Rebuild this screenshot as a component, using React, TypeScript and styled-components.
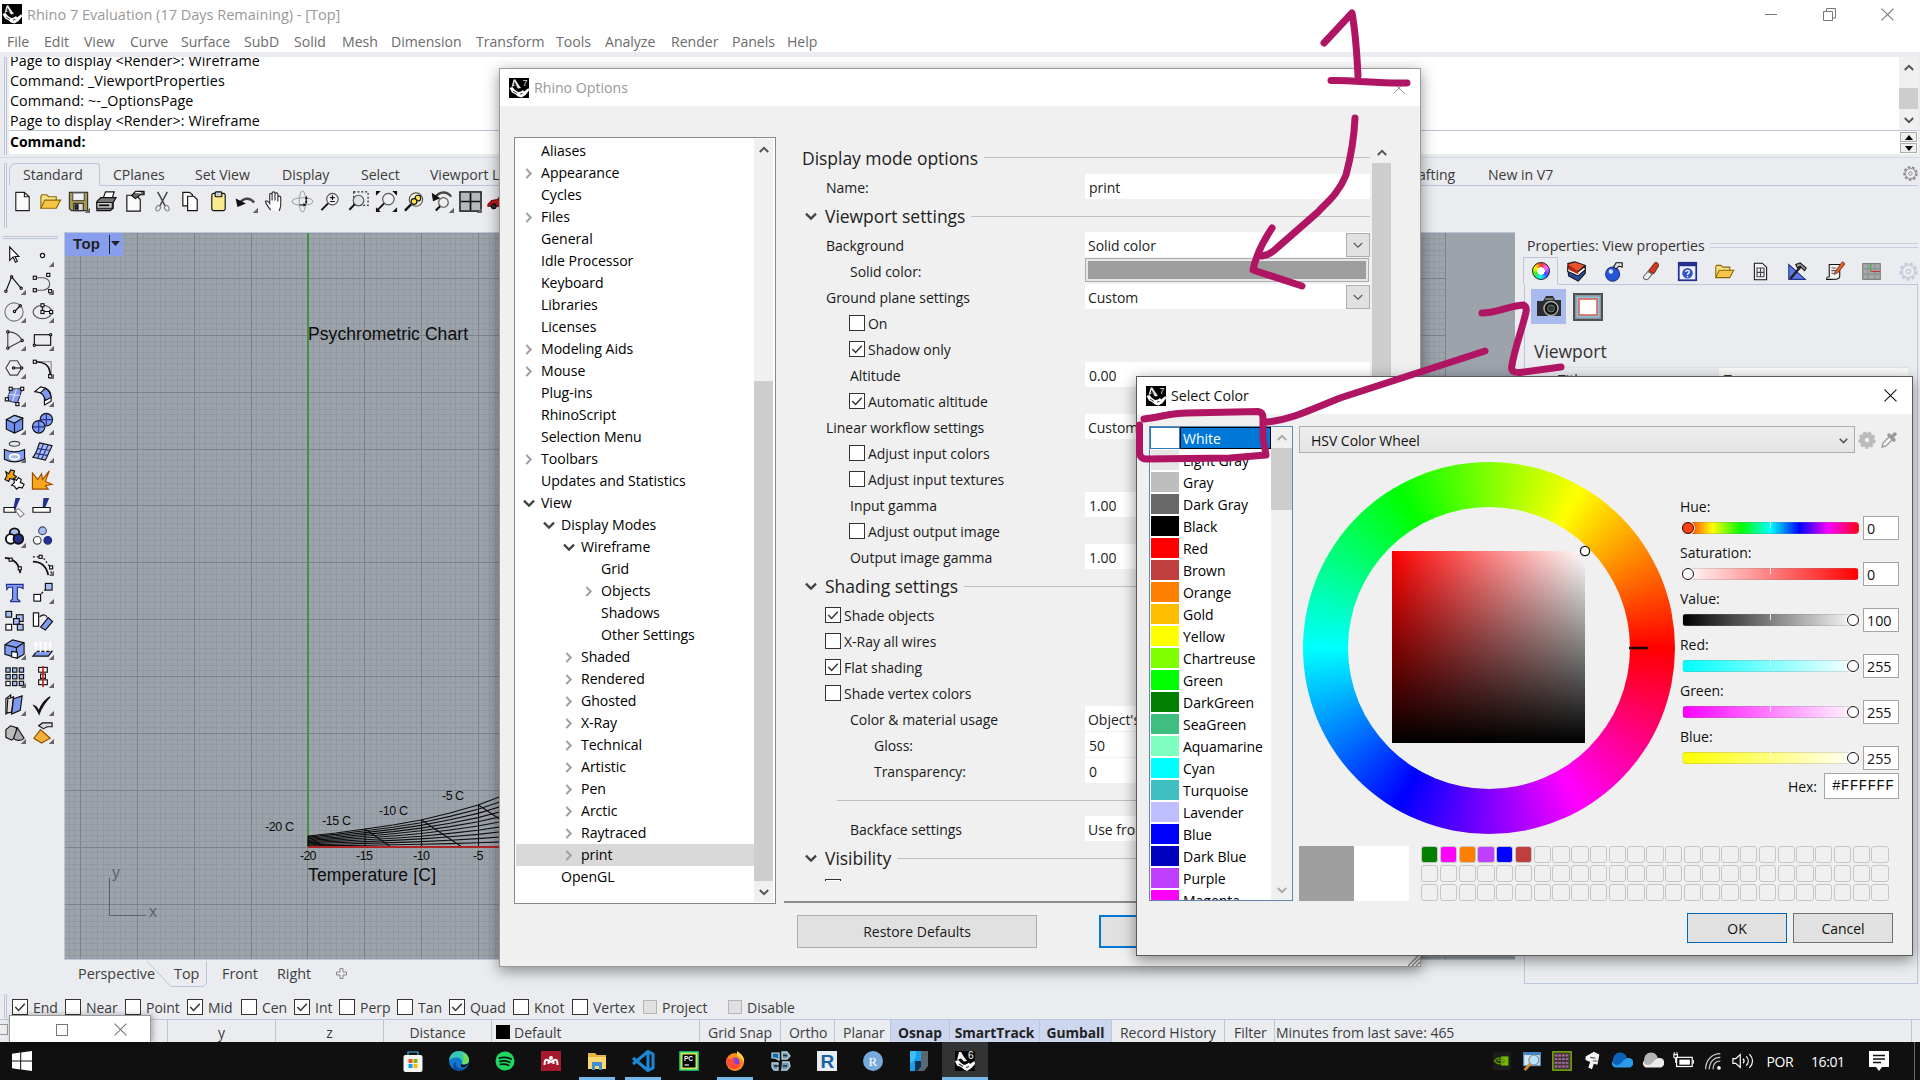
import React from "react";
import styled, { createGlobalStyle, css } from "styled-components";

const UI = `"Open Sans", "Noto Sans", sans-serif`;
const INK = "#1a1a1a";
const FACE = "#eaecf0";
const LINE = "#bcc6da";
const PEN = "#b01563";

const Global = createGlobalStyle`
  * { box-sizing: border-box; }
  body { margin: 0; background: ${FACE}; font-family: ${UI}; font-size: 14px; color: ${INK}; overflow: hidden; }
  svg { display: block; }
`;

/* ---------- main window ---------- */
const Screen = styled.div`
  position: relative; width: 1920px; height: 1080px; overflow: hidden;
  display: flex; flex-direction: column; background: ${FACE}; white-space: nowrap; letter-spacing: -0.03px;
`;
const TitleBar = styled.div`
  height: 28px; background: #fff; display: flex; align-items: center; padding: 0 26px 0 2px; gap: 5px; color: #999; font-size: 14.5px; letter-spacing: 0;
`;
const Spacer = styled.div`flex: 1;`;
const WindowButtons = styled.div`display: flex; gap: 45px;`;
const MenuBar = styled.div`
  height: 24px; background: #fff; display: flex; align-items: center; padding: 3px 0 0 7px; color: #6c6c6c; line-height: 24px; font-size: 14.1px;
`;
const Slot = styled.span<{ w: number }>`flex: none; width: ${p => p.w}px; display: block;`;
const CommandArea = styled.div`
  height: 105px; padding: 5px 2px 0 4px; display: flex; border-bottom: 0;
`;
const Grip = styled.div<{ h: number; mt?: number }>`
  flex: none; width: 3px; height: ${p => p.h}px; margin-top: ${p => p.mt || 0}px; border-left: 1px solid ${LINE}; border-right: 1px solid ${LINE};
`;
const CommandBox = styled.div`
  flex: 1; margin-left: 2px; height: 97px; background: #fff; color: #000; display: flex; flex-direction: column;
`;
const History = styled.div`height: 74px; border-bottom: 1px solid ${LINE}; display: flex; overflow: hidden;`;
const HistoryLines = styled.div`flex: 1; padding-left: 1px; line-height: 20px; margin-top: -6px; font-size: 14.3px; letter-spacing: 0.1px; div { height: 20px; }`;
const Prompt = styled.div`flex: 1; display: flex; padding-left: 1px; line-height: 22px; font-weight: 700; font-size: 14px; justify-content: space-between;`;
const SpinCol = styled.div`width: 18px; display: flex; flex-direction: column; gap: 1px; padding-top: 1px;`;
const SpinBtn = styled.div`height: 10px; width: 17px; border: 1px solid #aaa; background: #f0f0f0; display: grid; place-items: center;`;

const ScrollTrack = styled.div<{ w: number }>`
  flex: none; width: ${p => p.w}px; background: #f0f0f0; display: flex; flex-direction: column; align-items: center;
`;
const ScrollThumb = styled.div<{ h: number }>`flex: none; width: 100%; height: ${p => p.h}px; background: #cdcdcd;`;
const ScrollArrow = styled.div<{ h: number }>`flex: none; height: ${p => p.h}px; display: grid; place-items: center;`;
const ScrollGap = styled.div<{ h: number }>`flex: none; height: ${p => p.h}px;`;

const ToolTabs = styled.div`
  height: 29px; border-top: 1px solid #d3d9e5; display: flex; padding: 5px 2px 0 4px; color: #3c3c3c; font-size: 14.1px;
`;
const TabStrip = styled.div`
  flex: 1; margin-left: 2px; height: 23px; display: flex; border-bottom: 1px solid ${LINE}; line-height: 23px; padding-right: 0;
`;
const ActiveTab = styled.div`
  width: 91px; height: 23px; border: 1px solid ${LINE}; border-bottom-color: ${FACE}; border-radius: 7px 3px 0 0; padding-left: 13px; margin-right: 13px; line-height: 22px;
`;
const ToolRow = styled.div`height: 46px; display: flex; padding: 0 0 0 4px;`;
const ToolIcons = styled.div`display: flex; padding: 2px 0 0 2px; height: 30px;`;
const IconCell = styled.div<{ w?: number; h?: number }>`
  flex: none; width: ${p => p.w || 28}px; height: ${p => p.h || 28}px; display: grid; place-items: center;
`;
const Middle = styled.div`height: 760px; display: flex;`;
const Toolbox = styled.div`flex: none; width: 64px; padding: 4px 6px 0 0;`;
const ToolboxHandle = styled.div`height: 3px; margin-left: 3px; border-top: 1px solid ${LINE}; border-bottom: 1px solid ${LINE}; margin-bottom: 2px;`;
const ToolGrid = styled.div`display: grid; grid-template-columns: 28px 28px; grid-auto-rows: 28.12px;`;
const ViewColumn = styled.div`flex: none; width: 1451px; display: flex; flex-direction: column;`;
const Viewport = styled.div`height: 728px; border: 1px solid ${LINE}; border-right: 0; background: #9da3ab; overflow: hidden;`;
const ViewTabs = styled.div`height: 32px; position: relative; display: flex; padding-left: 14px; line-height: 27px; color: #3c3c3c; font-size: 14.4px;`;
const TabOutline = styled.svg`position: absolute; left: 82px; top: 0;`;

const Properties = styled.div`flex: 1; min-width: 0; padding: 0 2px 0 8px; display: flex; flex-direction: column; color: #333;`;
const PropTitle = styled.div`height: 25px; display: flex; align-items: center; gap: 5px; padding: 1px 0 0 4px; font-size: 14.1px; &::after { content: ""; flex: 1; height: 3px; border-top: 1px solid #c5cfe2; border-bottom: 1px solid #c5cfe2; }`;
const PropTabs = styled.div`height: 28px; display: flex; border-bottom: 1px solid ${LINE};`;
const PropTab = styled.div<{ on?: boolean }>`
  flex: none; width: ${p => (p.on ? 35 : 36.9)}px; height: 28px; display: grid; place-items: center;
  ${p => p.on && css`border: 1px solid ${LINE}; border-bottom-color: ${FACE};`}
`;
const PropBody = styled.div`height: 699px; border: 1px solid ${LINE}; border-top: 0; margin-left: 1px; padding: 4px 9px 0 6px;`;
const PropButtons = styled.div`display: flex; gap: 7px; align-items: center;`;
const PropButton = styled.div<{ on?: boolean }>`width: ${p => (p.on ? 35 : 30)}px; height: ${p => (p.on ? 35 : 28)}px; background: ${p => (p.on ? "#a9bbee" : "transparent")}; display: grid; place-items: center;`;
const PropHeading = styled.div`height: 43px; padding: 12px 0 0 3px; line-height: 31px; font-size: 17.5px;`;
const PropRow = styled.div`height: 27px; display: flex; border-top: 1px solid #dfe2e8; line-height: 24px; span { width: 188px; padding-left: 27px; } div { flex: 1; background: #fbfbfc; padding-left: 5px; }`;

const OsnapBar = styled.div`height: 28px; border-bottom: 1px solid ${LINE}; display: flex; padding: 2px 0 0 4px; color: #3c3c3c;`;
const Snap = styled.div<{ w: number }>`flex: none; width: ${p => p.w}px; display: flex; gap: 5px; padding-top: 5px; line-height: 17px;`;
const Box = styled.span<{ off?: boolean }>`
  flex: none; width: ${p => (p.off ? 14 : 16)}px; height: ${p => (p.off ? 14 : 16)}px; margin-top: ${p => (p.off ? 1 : 0)}px;
  border: 1px solid ${p => (p.off ? "#b5b5b5" : "#333")}; background: ${p => (p.off ? "#e0e0e0" : "#fff")}; display: grid; place-items: center;
`;
const StatusBar = styled.div`height: 22px; display: flex; line-height: 25px; color: #3c3c3c;`;
const Status = styled.div<{ w: number; on?: boolean; pad?: number; mid?: boolean }>`
  flex: none; width: ${p => p.w}px; height: 22px; border-right: 1px solid ${LINE}; padding-left: ${p => p.pad || 0}px; display: flex; gap: 4px;
  ${p => p.mid && "justify-content: center;"}
  ${p => p.on && "background: #ccd6ee; font-weight: 700; font-size: 13.8px; color: #222; justify-content: center;"}
`;
const LayerChip = styled.span`width: 14px; height: 14px; background: #000; margin-top: 5px;`;
const MiniWindow = styled.div`
  position: absolute; left: 9px; top: 1015px; width: 142px; height: 27px; background: #fff; border: 1px solid #999; border-bottom: 0;
  box-shadow: 2px 0 6px rgba(0,0,0,.3); display: flex; align-items: center; justify-content: space-between; padding: 1px 23px 0 46px;
`;
const MiniEdge = styled.div`position: absolute; left: -2px; top: 1024px; width: 10px; height: 11px; border: 1px solid #999; border-left: 0;`;
const Taskbar = styled.div`height: 38px; background: #101010; display: flex; color: #fff; align-items: stretch;`;
const Start = styled.div`width: 390px; padding: 9px 0 0 12px;`;
const App_ = styled.div<{ state?: "run" | "on" }>`
  flex: none; width: 46px; display: flex; justify-content: center; align-items: center; position: relative;
  ${p => p.state === "on" && "background: #333;"}
  ${p => p.state && css`&::after { content: ""; position: absolute; bottom: 0; height: 3px; left: ${p.state === "on" ? 0 : 5}px; right: ${p.state === "on" ? 0 : 5}px; background: #76b9ed; }`}
`;
const Tray = styled.div`display: flex; align-items: center; width: 428px; border-right: 1px solid #666; margin-right: 5px; font-size: 14px;`;
const TrayCell = styled.div<{ w: number }>`width: ${p => p.w}px; display: grid; place-items: center; letter-spacing: -0.4px;`;

/* ---------- options dialog ---------- */
const OptionsDialog = styled.div`
  position: absolute; left: 499px; top: 68px; width: 922px; height: 899px; background: #f0f0f0; border: 1px solid #9a9a9a;
  box-shadow: 0 4px 14px rgba(0,0,0,.42); display: flex; flex-direction: column; color: #1a1a1a;
`;
const DialogTitle = styled.div<{ h: number; dim?: boolean }>`
  height: ${p => p.h}px; background: #fff; display: flex; align-items: center; gap: 5px; padding: 0 15px 0 9px; color: ${p => (p.dim ? "#999" : "#111")}; font-size: 14.2px;
`;
const OptionsBody = styled.div`display: flex; padding: 31px 0 0 14px; height: 798px;`;
const Tree = styled.div`width: 262px; height: 767px; border: 1px solid #828790; background: #fff; display: flex; padding: 1px 2px 1px 1px; color: #000;`;
const TreeRows = styled.div`flex: 1; padding-top: 1px; font-size: 14.1px;`;
const TreeRow = styled.div<{ depth: number; on?: boolean }>`
  height: 22px; line-height: 22px; display: flex; align-items: center; padding-left: ${p => 3 + p.depth * 20}px; background: ${p => (p.on ? "#d9d9d9" : "transparent")};
`;
const Twist = styled.span`width: 22px; display: grid; place-items: center; padding-right: 3px;`;
const Form = styled.div`width: 607px; margin-left: 8px; display: flex; border-bottom: 2px solid #8b8b8b; height: 766px;`;
const FormRows = styled.div`width: 588px; padding: 0 2px 0 18px; height: 744px; overflow: hidden;`;
const Heading = styled.div<{ h: number; drop?: number }>`
  height: ${p => p.h}px; display: flex; align-items: center; font-size: 17.5px; gap: 6px; padding-top: ${p => p.drop || 0}px; color: #222; letter-spacing: -0.04px;
  &::after { content: ""; flex: 1; height: 1px; background: #c0c0c0; }
`;
const HeadTwist = styled.span`width: 17px; padding-left: 3px;`;
const Field = styled.div<{ pad: number }>`height: 26px; display: flex; padding-left: ${p => p.pad}px; line-height: 27px; gap: 3px;`;
const FieldLabel = styled.span`flex: 1; display: flex; gap: 3px; i { margin-top: 5px; }`;
const Input = styled.div<{ pad?: number }>`width: 285px; height: 25px; background: #fff; padding-left: ${p => p.pad ?? 4}px; display: flex; justify-content: space-between; color: #222;`;
const ComboBtn = styled.span`width: 24px; height: 24px; margin-top: 1px; background: #e1e1e1; border: 1px solid #adadad; display: grid; place-items: center;`;
const ColorBtn = styled.div`width: 284px; margin-right: 1px; height: 24px; border: 1px solid #adadad; background: #e6e6e6; padding: 2px; &::before { content: ""; display: block; height: 18px; background: #9e9e9e; }`;
const Rule = styled.div`height: 32px; padding: 16px 0 0 35px; &::before { content: ""; display: block; height: 1px; background: #c0c0c0; }`;
const OptionsFoot = styled.div`padding: 11px 0 0 297px; display: flex; gap: 62px;`;
const Button = styled.div<{ w: number; h: number; edge: string; thick?: number }>`
  flex: none; width: ${p => p.w}px; height: ${p => p.h}px; border: ${p => p.thick || 1}px solid ${p => p.edge}; background: #e1e1e1; display: grid; place-items: center;
`;
const ResizeGrip = styled.svg`position: absolute; right: 0; bottom: 0;`;

/* ---------- colour dialog ---------- */
const ColorDialog = styled.div`
  position: absolute; left: 1136px; top: 376px; width: 777px; height: 580px; background: #f0f0f0; border: 1px solid #5a5a5a;
  box-shadow: 0 4px 14px rgba(0,0,0,.45); display: flex; flex-direction: column; color: #111;
`;
const ColorBody = styled.div`display: flex; padding: 12px 0 0 12px; gap: 6px; height: 499px;`;
const NameList = styled.div`width: 144px; height: 475px; border: 1px solid #5f87b0; background: #fff; display: flex; overflow: hidden;`;
const NameRows = styled.div`flex: 1;`;
const NameRow = styled.div<{ on?: boolean }>`
  height: 22px; display: flex; line-height: 23px; color: ${p => (p.on ? "#fff" : "#000")};
  span { flex: 1; padding-left: 3px; ${p => p.on && "background: #0078d7; border: 1px solid #000; padding-left: 2px; line-height: 21px;"} }
`;
const Swatch = styled.i<{ c: string; on?: boolean }>`width: 28px; height: 20px; margin: 1px; background: ${p => p.c}; ${p => p.on && "outline: 1px solid #2a7ac8;"}`;
const ColorMain = styled.div`display: flex; flex-direction: column; width: 601px;`;
const PickerBar = styled.div`display: flex; align-items: center; height: 27px; gap: 3px;`;
const Picker = styled.div`width: 556px; height: 27px; border: 1px solid #adadad; background: linear-gradient(#eee, #e4e4e4); display: flex; align-items: center; justify-content: space-between; padding: 1px 6px 0 11px;`;
const PickerRow = styled.div`display: flex; height: 393px;`;
const Wheel = styled.div`
  flex: none; width: 372px; height: 372px; margin: 9px 0 0 4px; border-radius: 50%;
  background: conic-gradient(from 90deg, #f00, #f0f, #00f, #0ff, #0f0, #ff0, #f00); display: grid; place-items: center; position: relative;
`;
const WheelHole = styled.div`width: 282px; height: 282px; border-radius: 50%; background: #f0f0f0; display: grid; place-items: center;`;
const SatVal = styled.div`width: 193px; height: 192px; background: linear-gradient(transparent, #000), linear-gradient(90deg, #f00, #fff); margin: -2px 0 0 -1px;`;
const WheelMark = styled.svg`position: absolute; left: 0; top: 0;`;
const Sliders = styled.div`width: 219px; margin: 43px 0 0 5px;`;
const Channel = styled.div`height: 46px; line-height: 21px;`;
const ChannelRow = styled.div`display: flex; align-items: center; justify-content: space-between; height: 22px;`;
const SliderWrap = styled.div`width: 177px; height: 12px; margin-left: 2px; position: relative;`;
const SliderTrack = styled.div<{ g: string }>`height: 12px; border-radius: 4px; background: ${p => p.g}; border: 1px solid rgba(130,130,130,.28); &::after { content: ""; display: block; width: 1px; height: 6px; margin: -1px auto 0; background: rgba(255,255,255,.8); }`;
const Knob = styled.i<{ end?: boolean; c: string }>`position: absolute; top: 0; ${p => (p.end ? "right: 0;" : "left: 0;")} width: 12px; height: 12px; border-radius: 50%; border: 1.5px solid #111; background: ${p => p.c}; box-shadow: 0 0 0 1px rgba(255,255,255,.8);`;
const NumBox = styled.div`width: 36px; height: 24px; border: 1px solid #a5a5a5; background: #fff; padding-left: 3px; line-height: 23px; font-size: 14.3px;`;
const HexRow = styled.div`display: flex; justify-content: flex-end; align-items: center; gap: 7px; height: 26px; margin-top: 1px;`;
const HexBox = styled.div`width: 75px; height: 26px; border: 1px solid #a5a5a5; background: #fff; font: 14.6px/24px "Liberation Mono", monospace; padding-left: 7px; letter-spacing: 0.1px;`;
const Bottom = styled.div`display: flex; gap: 12px;`;
const Compare = styled.div`width: 110px; height: 55px; display: flex; background: #fff; &::before { content: ""; width: 55px; background: #9e9e9e; }`;
const Palette = styled.div`display: grid; grid-template-columns: repeat(25, 18.77px); grid-auto-rows: 18.9px;`;
const Chip = styled.i<{ c?: string }>`width: 17.4px; height: 17.4px; border-radius: 3px; border: 1px solid #c6c6c6; background: ${p => p.c || "transparent"};`;
const ColorFoot = styled.div`display: flex; justify-content: flex-end; gap: 6px; padding-right: 19px;`;

const PenLayer = styled.svg`position: absolute; left: 0; top: 0; pointer-events: none;`;

/* ---------- glyphs ---------- */
type Dir = "up" | "down" | "right";
const Chev = ({ d, c = "#555", s = 10, w = 2 }: { d: Dir; c?: string; s?: number; w?: number }) => (
  <svg width={s} height={s} viewBox="0 0 10 10" fill="none" stroke={c} strokeWidth={w}>
    <path d={d === "up" ? "M.8 7 5 2.8 9.2 7" : d === "down" ? "M.8 3 5 7.2 9.2 3" : "M3 .8 7 5 3 9.2"} />
  </svg>
);
const Check = () => (
  <svg width="14" height="14" viewBox="0 0 14 14" fill="none" stroke="#333" strokeWidth="1.5"><path d="M2.3 7 5.6 10.4 11.8 3.8" /></svg>
);
const Cross = ({ c = "#777", s = 12 }: { c?: string; s?: number }) => (
  <svg width={s} height={s} viewBox="0 0 12 12" stroke={c}><path d="M.5.5 11.5 11.5M11.5.5.5 11.5" /></svg>
);
const Logo = ({ n }: { n?: string }) => (
  <svg width="20" height="20" viewBox="0 0 20 20">
    <rect width="20" height="20" fill="#000" />
    <path d="M2.500 9 4.500 2 6 1 9.500 6.500 12 10 9 10.500 6.500 7Z" fill="#e8e8e8" />
    <path d="M4.500 7 5.500 3.500 8 8" fill="#333" />
    <path d="M.5 10 3.500 9 6 12 9 14 12 13.500 14 12 15 13.500 19.500 10 20 12.500 16.500 17 12.500 19.500 9 18.500 6 16 3 14.500Z" fill="#fff" />
    <path d="M4 13 8 15.500M11 16 13.500 15.500" stroke="#444" strokeWidth="1" fill="none" />
    {n && <text x="13.500" y="7.500" fontSize="9" fill="#ddd" fontFamily="Liberation Sans, sans-serif">{n}</text>}
  </svg>
);
const Gear = ({ s = 16, c = "#888", solid }: { s?: number; c?: string; solid?: boolean }) => (
  <svg width={s} height={s} viewBox="0 0 16 16" fill="none" stroke={c}>
    <circle cx="8" cy="8" r="6.8" strokeWidth="1.8" strokeDasharray="2.9 1.8" strokeLinecap="butt" />
    <circle cx="8" cy="8" r={solid ? 4.2 : 5.4} strokeWidth={solid ? 4.5 : 1} />
    {!solid && <circle cx="8" cy="8" r="1.8" />}
  </svg>
);
const Pic = ({ k, corner, s = 24 }: { k: React.ReactNode; corner?: boolean; s?: number }) => (
  <svg width={s} height={s} viewBox="0 0 24 24" fill="none" stroke="#111" strokeWidth="1.2">
    {k}
    {corner && <path d="M24 18.5V24H18.5Z" fill="#666" stroke="none" />}
  </svg>
);
const sq = (x: number, y: number, r = 1.6) => <rect x={x - r} y={y - r} width={2 * r} height={2 * r} fill="#fff" key={`${x}-${y}`} />;
const dot = (x: number, y: number) => <circle cx={x} cy={y} r="1.2" fill="#fff" key={`${x}:${y}`} />;
const cell = (x: number, y: number, s: number, f: string) => <rect x={x} y={y} width={s} height={s} fill={f} key={`${x}/${y}`} />;
const BL = "#7f9af0", LB = "#a9bdf5", NV = "#23308c";

const folder = <><path d="M2 19V7l1-2h5l2 2h8v4" fill="#f8e08a" stroke="#8a6800" /><path d="M2 19 6 10.500H22.500L18 19Z" fill="#f6c64a" stroke="#8a6800" /></>;
const mag = <><circle cx="14" cy="9.500" r="6" stroke="#555" fill="#eef0f3" /><path d="M9.500 14 2.500 21" strokeWidth="2" /></>;

const topIcons: [React.ReactNode, boolean?][] = [
  [<path d="M5 2.500H14L19 7V21.500H5ZM14 2.500V7H19" fill="#fafafa" stroke="#222" />],
  [folder],
  [<><path d="M2.500 2.500H21.500V21.500H4.500L2.500 19.500Z" fill="#a79a4b" stroke="#333" /><rect x="6" y="3" width="12" height="8" fill="#eef2f4" stroke="#555" /><rect x="7" y="14" width="10" height="7.500" fill="#ddd" stroke="#333" /><rect x="8.500" y="15.500" width="3" height="4.500" fill="#333" /></>, true],
  [<><path d="M8 10 11 2H20L17.500 10Z" fill="#fff" /><path d="M2 12 6 8H22L19 13V19L16 21.500H2Z" fill="#777" /><path d="M2 13H18V19H2Z" fill="#d6d6d6" /><path d="M4 16H15" strokeWidth="2" /></>],
  [<><path d="M4 5.500H14L18 10V22H4Z" fill="#fafafa" /><path d="M9 6 13 1.500H22V5H18L13 9Z" fill="#666" /><path d="M13 2.500 19 3" stroke="#fff" /></>],
  [<><path d="M7 2 15 17M17 2 9 17" stroke="#444" strokeWidth="1.500" /><ellipse cx="7.500" cy="19" rx="2.200" ry="3" transform="rotate(30 7.500 19)" stroke="#888" /><ellipse cx="16.500" cy="19" rx="2.200" ry="3" transform="rotate(-30 16.500 19)" stroke="#888" /></>],
  [<><path d="M4 2.500H11L14 5V16.500H4Z" fill="#fff" /><path d="M9 6.500H15.500L19 10V21.500H9Z" fill="#fff" /></>],
  [<><rect x="5" y="3.500" width="14" height="18" rx="2" fill="#fbe98c" /><rect x="8.500" y="2" width="7" height="5" rx="1" fill="#ccc" /></>],
  [<><path d="M4 15C8 8 15 7 20 13" stroke="#444" strokeWidth="2.600" /><path d="M1.500 10 3 17 10 14Z" fill="#111" /></>, true],
  [<path d="M8 21C5 17 3 14 2.500 12 3.500 10.500 5.500 12 7 14V5C7 3 9.500 3 9.500 5V11 3.500C9.500 1.500 12.500 1.500 12.500 3.500V11 4.500C12.500 2.500 15.500 2.500 15.500 4.500V12 7.500C16 6 18.500 6 18.500 8V15C18.500 19 17 20 17 22" fill="#fff" stroke="#333" />],
  [<g stroke="#999" strokeWidth="1"><ellipse cx="12" cy="12" rx="11" ry="4" /><ellipse cx="12" cy="12" rx="3.500" ry="11" /><path d="M9 15.500H13.500M16 8.500V13" stroke="#111" /><path d="M16 15 17 11.500 14.500 12ZM13 13.500 13 17.500 16 15.500ZM16 6 14.500 9H17.500Z" fill="#111" stroke="none" /></g>],
  [<>{mag}<path d="M11.500 8H16.500M14 5.500V10.500M11.500 12H16.500" /></>],
  [<><rect x="7" y="2" width="15" height="14" stroke="#222" strokeDasharray="2 2" /><circle cx="12" cy="11" r="5.500" fill="#dfe2e8" stroke="#555" /><path d="M8 15 2.500 20.500" strokeWidth="2.200" /></>],
  [<>{mag}<path d="M1 1H6L1 6ZM23 1H18L23 6ZM23 23H18L23 18ZM1 23V18L6 23Z" fill="#111" stroke="none" /></>],
  [<><circle cx="13.500" cy="10" r="7" stroke="#555" fill="#f4f2dc" /><circle cx="15.500" cy="8.500" r="3" fill="#ffe14a" /><circle cx="11.500" cy="12" r="3" fill="#ffe14a" /><path d="M8.500 15 2 21.500" strokeWidth="2.400" /></>],
  [<><path d="M4 8C9 1 17 1 21 7" stroke="#444" strokeWidth="2.400" /><path d="M1.500 4 2.500 11 8.500 8.500Z" fill="#111" /><circle cx="13" cy="13" r="5" stroke="#555" fill="#eee" /><path d="M9.500 17 5 21.500" strokeWidth="2.200" /></>, true],
  [<><rect x="1" y="2" width="22" height="20" fill="#b4b7bc" strokeWidth="1.500" /><path d="M12 3V21M2 12H22" strokeWidth="1.800" /></>, true],
  [<><path d="M1 15 5 11 11 10 14 6H24V17H1Z" fill="#c81a1a" stroke="#700" /><circle cx="7" cy="17" r="2.500" fill="#333" /></>],
];

const boxShape = (f: string) => <><path d="M3.500 8 12 3.500 20.500 6.500V18L12 22 3.500 18Z" fill={f} /><path d="M3.500 8 12 3.500 20.500 6.500 12 11.500Z" fill={LB} /><path d="M12 11.500V22" /></>;
const sideIcons: [React.ReactNode, boolean?][] = [
  [<path d="M7 3V17L10.500 13.500 13 19 15 18 12.500 13H16.500Z" fill="#fff" />],
  [<circle cx="12" cy="12" r="2.200" fill="#fff" />, true],
  [<><path d="M3 20 9 5 19 17" />{dot(3, 20)}{dot(9, 5)}{dot(19, 17)}</>, true],
  [<><path d="M4 6H12C22 6 22 19 12 19H4" stroke="#555" />{sq(4, 6)}{sq(18, 3)}{sq(4, 19)}{sq(20, 20)}</>, true],
  [<><circle cx="11.500" cy="12.500" r="9.500" stroke="#777" /><path d="M12 12 18 6" />{dot(12, 12)}{dot(18, 6)}</>, true],
  [<><ellipse cx="12" cy="12.500" rx="9.800" ry="7" stroke="#555" /><path d="M12 12H21M12 12V5" />{sq(12, 5.500)}{sq(12, 12.500)}{sq(21, 12.500)}</>, true],
  [<><path d="M5 4C13 4 17 7 20 13L5 21Z" stroke="#444" />{dot(5, 4)}{dot(20, 13)}{dot(5, 21)}</>, true],
  [<><rect x="3.500" y="7" width="17" height="11" fill="none" />{dot(20.500, 7)}{dot(3.500, 18)}</>, true],
  [<><path d="M7.500 5H15L19.500 12.500 15 20H7.500L3 12.500Z" stroke="#444" /><path d="M11 12.500H19" />{dot(11, 12.500)}{dot(19.500, 12.500)}</>, true],
  [<><path d="M4 6H21V22" stroke="#888" /><path d="M4 6C15 6 20 10 20 20" strokeWidth="1.800" />{sq(4, 6)}{sq(20, 21)}</>, true],
  [<><path d="M8 5H20L15 20 4 17Z" fill={BL} stroke="#334" /><path d="M14 5 10 18M6 11 18 12" stroke="#dde" />{sq(8, 5)}{sq(20, 5)}{sq(4, 16)}{sq(15, 21)}</>, true],
  [<><path d="M4 8 10 3C17 4 21 8 21 14V18L14 22V14C13 10 10 9 4 8Z" fill="#fff" /><path d="M10 9 15 4.500C19 7 20.500 10 21 14L15 17C14 13 13 11 10 9Z" fill={BL} /></>, true],
  [boxShape("#6f8ff0"), true],
  [<><circle cx="16" cy="8" r="6.500" fill={BL} /><circle cx="8" cy="15.500" r="6.500" fill={BL} /><path d="M16 1.500V14.500M9.500 8H22.500M8 9V22M1.500 15.500H14.500" stroke={NV} /></>, true],
  [<><ellipse cx="12" cy="4" rx="5.500" ry="2.500" stroke="#444" /><path d="M1.500 10C8 13 16 13 22.500 10V20C16 23.500 8 23.500 1.500 20Z" fill={BL} /><ellipse cx="12" cy="17.500" rx="5" ry="2.800" fill={LB} stroke="#fff" strokeWidth="2" /></>, true],
  [<><path d="M9 3 22 6 15 21 2 18C6 14 7 7 9 3Z" fill={LB} /><path d="M13 4 7 19M18 5 11 20M7 9 20 11M4 14 17 16" stroke={NV} /></>, true],
  [<><path d="M3 4 6 6 8 2 12 3 11 7 14 9 11 12 7 11 6 14 2 12 4 8Z" fill="#f5a50c" /><path d="M11 11 14 13 16 10 19 12 18 15 22 17 20 21 17 20 14 22 12 19 9 18 12 15Z" fill="#fff" /></>],
  [<path d="M1.500 22V5L7 12 11 6 12 12 19 3 15 14 22 17 15 18.500 18 22Z" fill="#f7a61d" stroke="#a04c00" />],
  [<><path d="M11 12 13 2H18L13 14Z" fill={NV} stroke="none" /><path d="M1 12H12L13 17H1Z" fill="#fff" /><path d="M13 15 16 13 22 19 18 22Z" fill="#fff" stroke="#888" /></>, false],
  [<><path d="M12 13 13 2H19L14 14Z" fill={NV} stroke="none" /><path d="M2 12H20V17H2Z" fill="#fff" /></>, false],
  [<><circle cx="12" cy="8.500" r="5" fill={LB} strokeWidth="2" /><circle cx="8" cy="14.500" r="5" fill="#fff" strokeWidth="2" /><circle cx="16" cy="14.500" r="5" fill={NV} strokeWidth="2" /></>, true],
  [<><circle cx="12" cy="6" r="4" fill={LB} stroke="#446" /><circle cx="6.500" cy="16" r="4" fill="#fff" stroke="#444" /><circle cx="17.500" cy="16" r="4" fill={NV} stroke={NV} /></>],
  [<><path d="M2 5C12 6 17 11 18 21" strokeWidth="1.800" />{sq(8, 7)}{sq(17.500, 16)}</>],
  [<><path d="M2 9C11 9 16 14 18 23" strokeWidth="1.800" /><path d="M2 4H12L21 16V23" strokeDasharray="2 2" />{sq(10, 4)}{sq(21, 15)}</>, true],
  [<path d="M3.500 3.500H21V8L18 6.500H15V19L17.500 20.500V21.500H8V20.500L10 19V6.500H6L4 9Z" fill={BL} stroke={NV} />],
  [<><path d="M7 17 18 6" strokeDasharray="3 2" />{cell(3, 14, 7, "#fff")}{cell(15, 2.500, 7, LB)}</>, true],
  [<>{cell(3, 2.500, 6, LB)}{cell(14, 6, 7, LB)}{cell(11, 10, 6, LB)}{cell(3, 16, 6, "#fff")}{cell(15, 16, 6, LB)}</>],
  [<><rect x="2.500" y="4" width="5.500" height="14" fill="#fff" /><path d="M9 8C13 5 16 6 17 9" /><path d="M10 19 18 9 22.500 13 15 22Z" fill={BL} /></>],
  [<><path d="M2 8 10 3 22 6V18L15 22 2 18Z" fill={BL} /><path d="M2 8 14 11 22 6M14 11V16" /><path d="M9 15 15 16V22L9 21Z" fill="#fff" /></>, true],
  [<><path d="M2 20 6 15H22L18 20Z" fill={BL} /><path d="M5 16V6M10 16V6M15 16V6M20 15V6" stroke="#fff" strokeWidth="1.800" /><path d="M5 4 3 8H7ZM10 4 8 8H12ZM15 4 13 8H17ZM20 4 18 8H22Z" fill="#fff" stroke="none" /></>, true],
  [<>{[3, 10, 17].flatMap(y => [3, 10, 17].map(x => cell(x, y, 4.500, y === 17 && x === 3 ? "#fff" : LB)))}</>, true],
  [<>{[2.500, 15.500].map(y => <rect key={y} x="8" y={y} width="9" height="5" fill="#fff" />)}<rect x="10" y="9.500" width="5" height="4.500" fill="#fff" /><path d="M12.500 1V23" stroke="#d42020" strokeWidth="1.800" /></>, true],
  [<><path d="M3 6 8 2V18L3 22Z" fill="#fff" /><path d="M5 6 11 4 9 20 4 21Z" fill="#ddd" /><path d="M11 6 20 3 18 18 9 22Z" fill={BL} /></>, true],
  [<path d="M3 13C6 14 7 16 8 19 11 12 14 7 20 4 15 9 11 15 8.500 22 7 18 5 16 3 13Z" fill="#111" />, true],
  [<><path d="M3 9 8 5 14 7V16L9 20 3 17Z" fill="#bbb" /><path d="M15 7 22 18C20 21 13 21 11 18Z" fill="#aaa" /></>, true],
  [<><path d="M3 18 10 9 20 18 11 23Z" fill="#f5b03a" stroke="#8a5200" /><path d="M8 5 12 2H22V6H17L13 8Z" fill="#ddd" /></>, true],
];

const propIcons: React.ReactNode[] = [
  null,
  <><path d="M2 9 14 15 22 8V14L14 23 3 17Z" fill="#2a4a9c" /><path d="M2 6 14 12 22 6V10L14 17 2 12Z" fill="#fff" /><path d="M2 3 10 1 22 5 14 12 3 8Z" fill="#f0502a" /><path d="M3 4 14 12V15L3 10Z" fill="#b32c12" stroke="none" /></>,
  <><circle cx="11" cy="15" r="8" fill="#2457d6" stroke={NV} /><circle cx="9" cy="12" r="2.500" fill="#cfe0ff" stroke="none" /><path d="M12 7 15 2H22V7L18 6 15 9Z" fill="#ddd" /></>,
  <><path d="M17 2C20 1 22 4 21 6L16 14 10 11Z" fill="#d23b1e" stroke="#733" /><path d="M10 11 16 14 12 17 10 12Z" fill="#b32c12" stroke="none" /><path d="M9 12 14 15 9 21C6 22 3 20 4 18Z" fill="#eee" stroke="#666" /></>,
  <><rect x="2" y="2" width="20" height="20" fill="#eef" stroke={NV} strokeWidth="2" /><path d="M2 4H22" stroke={NV} strokeWidth="4" /><circle cx="12" cy="14" r="6" fill="#3156c8" stroke="none" /><path d="M10 12.500C10 10 14.500 10 14 12.500 14 14 12 14 12 16M12 17V18.500" stroke="#fff" strokeWidth="1.500" /></>,
  folder,
  <><path d="M5 2.500H14L19 7V21.500H5Z" fill="#f2f2f2" /><path d="M8 8H16V18H8ZM12 8V18M8 13H16" stroke="#444" /></>,
  <><path d="M2 4V21H21Z" fill="#5b7be0" stroke={NV} /><path d="M4 20 16 6" stroke="#222" strokeWidth="3" /><path d="M10 4 15 2 22 8 20 11 15 6 12 8Z" fill="#999" /></>,
  <><path d="M6 4H18V17C18 21 15 21 3 21 3 18 4 18 6 18Z" fill="#f4f4f0" /><path d="M8.500 8H14M8.500 11H14M8.500 14H13" stroke="#555" /><path d="M13 12 21 1 24 3 16 13 12 15Z" fill="#e8641e" stroke="#943" /></>,
  <><rect x="2" y="3" width="20" height="18" fill="#a5aaa8" stroke="#777" /><path d="M2 9H22M2 15H22M8 3V21M16 3V21" stroke="#8b908e" /><path d="M11 3V12" stroke="#3a3" /><path d="M11 12H22" stroke="#c33" /></>,
];
const ColorRing = styled.div`width: 18px; height: 18px; border-radius: 50%; background: radial-gradient(#fff 32%, transparent 34%), conic-gradient(#f33, #f6f, #44f, #0ff, #3e3, #ff0, #f33); border: 1px solid #222;`;

/* ---------- viewport drawing ---------- */
const P = 56.87;
const Drawing = () => {
  const top = [[308, 836], [336, 833], [365, 829], [393, 825], [421, 820], [450, 813], [478, 805], [510, 793]];
  const base = 847;
  const minor: React.ReactNode[] = [];
  const major: React.ReactNode[] = [];
  const minX0 = 80.5 - P;
  for (let i = 0; i <= 250; i++) {
    const x = minX0 + (i * P) / 10;
    if (x < 65 || x > 1446) continue;
    const isMajor = i % 10 === 0;
    (isMajor ? major : minor).push(<path key={`x${i}`} d={`M${Math.round(x - 0.5) + 0.5} 233V960`} stroke={isMajor ? "#7b8289" : "#9299a1"} />);
  }
  for (let i = 0; i <= 140; i++) {
    const y = 278.5 - P + (i * P) / 10;
    if (y < 233 || y > 960) continue;
    const isMajor = i % 10 === 0;
    (isMajor ? major : minor).push(<path key={`y${i}`} d={`M65 ${Math.round(y - 0.5) + 0.5}H1445`} stroke={isMajor ? "#7b8289" : "#9299a1"} />);
  }
  const labels: [string, number, number, number, number][] = [
    ["Psychrometric Chart", 308, 340, 160, 17.5], ["Temperature [C]", 308, 881, 128, 17.5],
    ["-20 C", 265, 831, 29, 12.5], ["-15 C", 322, 825, 29, 12.5], ["-10 C", 379, 815, 29, 12.5], ["-5 C", 442, 800, 22, 12.5],
    ["-20", 300, 860, 16.500, 12.5], ["-15", 356, 860, 17, 12.5], ["-10", 413, 860, 17, 12.5], ["-5", 473, 860, 10.500, 12.5],
  ];
  return (
    <svg width="1452" height="727" viewBox="65 233 1452 727" fontFamily="Liberation Sans, Arial, sans-serif">
      {minor}
      {major}
      <path d="M308 233V846" stroke="#419247" strokeWidth="2" />
      <g stroke="#0c0c0c" fill="none" strokeWidth="1.1">
        {[1, 0.9, 0.8, 0.7, 0.6, 0.5, 0.4, 0.3, 0.2, 0.1].map(f => (
          <polyline key={f} points={top.map(([x, y]) => `${x},${base - (base - y) * f}`).join(" ")} />
        ))}
        <path d="M308 836V847M365 829V847M421.500 820V847M478.500 805V847M308 836 324 847M365 829 391 847M421.500 820 462 847M478.500 805 510 826" />
      </g>
      <path d="M308 847H500" stroke="#b02626" strokeWidth="2" />
      {labels.map(([t, x, y, w, s]) => <text key={t + x} x={x} y={y} textLength={w} fontSize={s} fill="#0c0c0c">{t}</text>)}
      <path d="M109.500 878V915.500H146" stroke="#5d6268" fill="none" />
      <text x="112" y="878" fontSize="16" fill="#5d6268">y</text>
      <text x="149" y="917" fontSize="16" fill="#5d6268">x</text>
      <rect x="65" y="233" width="58" height="23" rx="1" fill="#879eed" />
      <text x="73" y="249" fontSize="15" fontWeight="700" fill="#222" textLength="27">Top</text>
      <path d="M109.500 235V254" stroke="#222" /><path d="M111 241H120L115.500 246Z" fill="#222" />
    </svg>
  );
};

/* ---------- data ---------- */
const menus: [string, number][] = [["File", 37], ["Edit", 40], ["View", 46], ["Curve", 51], ["Surface", 63], ["SubD", 50], ["Solid", 48], ["Mesh", 49], ["Dimension", 85], ["Transform", 80], ["Tools", 49], ["Analyze", 66], ["Render", 61], ["Panels", 55], ["Help", 50]];
const tree: [string, number, ("c" | "o")?][] = [
  ["Aliases", 0], ["Appearance", 0, "c"], ["Cycles", 0], ["Files", 0, "c"], ["General", 0], ["Idle Processor", 0], ["Keyboard", 0], ["Libraries", 0], ["Licenses", 0],
  ["Modeling Aids", 0, "c"], ["Mouse", 0, "c"], ["Plug-ins", 0], ["RhinoScript", 0], ["Selection Menu", 0], ["Toolbars", 0, "c"], ["Updates and Statistics", 0],
  ["View", 0, "o"], ["Display Modes", 1, "o"], ["Wireframe", 2, "o"], ["Grid", 3], ["Objects", 3, "c"], ["Shadows", 3], ["Other Settings", 3],
  ["Shaded", 2, "c"], ["Rendered", 2, "c"], ["Ghosted", 2, "c"], ["X-Ray", 2, "c"], ["Technical", 2, "c"], ["Artistic", 2, "c"], ["Pen", 2, "c"], ["Arctic", 2, "c"], ["Raytraced", 2, "c"], ["print", 2, "c"], ["OpenGL", 1],
];
const names: [string, string][] = [
  ["White", "#fff"], ["Light Gray", "#e6e6e6"], ["Gray", "#bebebe"], ["Dark Gray", "#696969"], ["Black", "#000"], ["Red", "#f00"], ["Brown", "#bf3f3f"], ["Orange", "#ff7f00"], ["Gold", "#ffbf00"], ["Yellow", "#ff0"],
  ["Chartreuse", "#7fff00"], ["Green", "#0f0"], ["DarkGreen", "#007f00"], ["SeaGreen", "#3fbf7f"], ["Aquamarine", "#7fffbf"], ["Cyan", "#0ff"], ["Turquoise", "#3fbfbf"], ["Lavender", "#bfbfff"], ["Blue", "#00f"], ["Dark Blue", "#0000bf"], ["Purple", "#bf3fff"], ["Magenta", "#f0f"],
];
const snaps: [string, number, ("x" | "d")?][] = [["End", 53, "x"], ["Near", 60], ["Point", 62], ["Mid", 54, "x"], ["Cen", 53], ["Int", 45, "x"], ["Perp", 58], ["Tan", 52], ["Quad", 64, "x"], ["Knot", 59], ["Vertex", 71], ["Project", 85, "d"], ["Disable", 80, "d"]];
const channels: [string, string, string, boolean, string][] = [
  ["Hue:", "linear-gradient(90deg,#f00,#ff0,#0f0,#0ff,#00f,#f0f,#f02)", "0", false, "#ff4010"],
  ["Saturation:", "linear-gradient(90deg,#fff,#f00)", "0", false, "#fff"],
  ["Value:", "linear-gradient(90deg,#000,#fff)", "100", true, "#fff"],
  ["Red:", "linear-gradient(90deg,#0ff,#fff)", "255", true, "#fff"],
  ["Green:", "linear-gradient(90deg,#f0f,#fff)", "255", true, "#fff"],
  ["Blue:", "linear-gradient(90deg,#ff0,#fff)", "255", true, "#fff"],
];
const chips = ["#007f00", "#f0f", "#ff7f00", "#bf3fff", "#00f", "#bf3f3f"];

const taskIcons: [React.ReactNode, ("run" | "on")?][] = [
  [<><path d="M7 7V3H17V7" stroke="#3fb3e6" /><rect x="2.500" y="6" width="19" height="17" rx="2" fill="#f5f5f5" stroke="none" /><path d="M7.500 10H11.500V14H7.500Z" fill="#f25022" stroke="none" /><path d="M12.500 10H16.500V14H12.500Z" fill="#7fba00" stroke="none" /><path d="M7.500 15H11.500V19H7.500Z" fill="#00a4ef" stroke="none" /><path d="M12.500 15H16.500V19H12.500Z" fill="#ffb900" stroke="none" /></>],
  [<g stroke="none"><circle cx="12" cy="12" r="10" fill="#1178d0" /><path d="M2 11C3 5 7 2 12 2 18 2 22 6.500 22 11 22 15 18 16 15 15 16 9 10 6 2 11Z" fill="#37c5b4" /><path d="M15 3C20 5 22 8 22 11 22 15 18 16 15 15 17 11 17 7 15 3Z" fill="#6fdc5c" /><path d="M9 13C8 19 13 21 19 19 16 22 12 22.500 9 21.500 5 20 5 14 9 13Z" fill="#0c4aa0" /><path d="M14 15C18 17 21 15 21.500 13.500 21 17 17 19 14 18Z" fill="#101010" /></g>],
  [<><circle cx="12" cy="12" r="9.500" fill="#1ed760" stroke="none" /><path d="M6.500 9C10 8 14.500 8.300 18 10M7 12.300C10.500 11.500 13.500 11.800 16.700 13.300M7.500 15.400C10 14.800 13 15 15.500 16.300" strokeWidth="1.800" strokeLinecap="round" /></>],
  [<><rect x="2" y="2" width="20" height="20" fill="#a6192e" stroke="none" /><path d="M5.500 16C5.500 9 8 10 12 13 16 10 18.500 9 18.500 16M9.500 12V15M14.500 12V15" stroke="#fff" strokeWidth="2" /><circle cx="12" cy="9" r="2" fill="#fff" stroke="none" /></>],
  [<g stroke="none"><path d="M3 4H10L12 6H21V20H3Z" fill="#e8b53c" /><path d="M3 8H21V20H3Z" fill="#fbd770" /><path d="M7 13H17V21H14V17H10V21H7Z" fill="#3f8fd8" /></g>, "run"],
  [<><path d="M17 2.500 22 5V19L17 21.500 2 9M17 21.500V2.500L2 15" stroke="#1b8ad6" strokeWidth="3" strokeLinejoin="round" /></>, "run"],
  [<><rect x="3" y="3" width="18" height="18" fill="#d7e84a" stroke="#21d789" strokeWidth="1.500" /><rect x="5.500" y="5.500" width="13" height="13" fill="#000" stroke="none" /><text x="7" y="12" fontSize="6.500" fontWeight="700" fill="#fff" stroke="none" fontFamily="Liberation Sans, sans-serif">PC</text><path d="M7.500 16H12" stroke="#fff" /></>],
  [<g stroke="none"><circle cx="12" cy="13" r="9" fill="#ff8a16" /><path d="M14 2C19 5 22 9 21 14 20 10 17 8 14 7Z" fill="#ffd43a" /><circle cx="12" cy="13" r="4.500" fill="#7a3fe0" /><path d="M4 8C6 12 9 9 12 10 9 15 14 17 18 13 18 20 10 22 6 18 3 16 3 11 4 8Z" fill="#ff4b3a" /></g>, "run"],
  [<><path d="M3 4H10V11L6 9H3Z" fill="#0f6ea8" stroke="#cde" /><path d="M13 3H18L21 7 18 10H13ZM3 14H9V21H5L3 18ZM13 13H20L21 17 18 21H12" fill="#6f98b0" stroke="#b8d0dc" strokeWidth="1.300" /><path d="M14 6.500H18M5 17H10M14 17H18" stroke="#1b2a33" strokeWidth="1.500" /></>],
  [<><rect x="2" y="2" width="20" height="20" fill="#e6edf5" stroke="none" /><text x="5.500" y="19" fontSize="19" fontWeight="700" fill="#1f5fa8" stroke="none" fontFamily="Liberation Sans, sans-serif">R</text></>],
  [<><circle cx="12" cy="12" r="10" fill="#75aadb" stroke="none" /><text x="7.500" y="17" fontSize="13" fill="#fff" stroke="none" fontFamily="Liberation Serif, serif">R</text></>],
  [<g stroke="none"><path d="M3 2H14V12L10 22H3Z" fill="#1aa0e8" /><path d="M14 2H21V17L17 22H10L14 17Z" fill="#5c666e" /><path d="M3 14C8 13 9 8 9 2H3Z" fill="#3fc0f5" /><path d="M8 12H14V18L10 22H8Z" fill="#0b2f52" /></g>],
  [<g stroke="none"><path d="M2 2H22V22H2Z" fill="#050505" /><path d="M4 11 6 3 8 3 11 8 14 12 11 12.500 8 9.500Z" fill="#f0f0f0" /><path d="M2 12 5.500 11 8 14 11 16 14 15 16 13.500 17 15 21.500 12 22 15 18.500 19 14 22 11 20.500 8 18 4 16.500Z" fill="#fff" /><path d="M6 15 10 17.500M13 18.500 16 17.500" stroke="#333" /><text x="15" y="9.500" fontSize="10" fill="#fff" fontFamily="Liberation Sans, sans-serif">6</text></g>, "on"],
];
const trayIcons: React.ReactNode[] = [
  <><rect x="2" y="2" width="20" height="20" fill="#1c1c1c" stroke="none" /><rect x="11" y="7" width="8" height="10" fill="#76b900" stroke="none" /><path d="M4 12C7 7 12 8 15 12 12 16 7 16 4 12ZM7 12C9 10 10 11 12 13" stroke="#5d9100" strokeWidth="1.500" /></>,
  <><rect x="3" y="3" width="18" height="14" fill="#d7e8f5" stroke="#5a9bd0" /><path d="M3 4H21" stroke="#3f86c8" strokeWidth="3" /><circle cx="14" cy="11" r="5.500" fill="#b9e3f7" stroke="#888" /><path d="M10 15 4 22" stroke="#d48a3a" strokeWidth="3" /></>,
  <><rect x="2" y="2" width="20" height="20" fill="#4b3438" stroke="#76b900" strokeWidth="1.500" /><path d="M4 6H20M4 10H20M4 14H20M4 18H20" stroke="#a070a0" strokeWidth="2" strokeDasharray="3 1" /></>,
  <><path d="M5 7 14 2 20 5 18 16 14 15 12 21 8 19 10 13 5 11Z" fill="#f5f5f5" stroke="none" /><path d="M10 8 16 9M13 12 18 12" stroke="#555" /></>,
  <g stroke="none"><path d="M4 19A4.500 4.500 0 0 1 3 11 7 7 0 0 1 17 9 5 5 0 0 1 21 19Z" fill="#2a9bea" /><path d="M2.500 11.500A7 7 0 0 1 17 9C13 11 12 15 8 16 5 17 1 15 2.500 11.500Z" fill="#0a63b8" /></g>,
  <g stroke="none"><path d="M4 19A4.500 4.500 0 0 1 3 11 7 7 0 0 1 17 9 5 5 0 0 1 21 19Z" fill="#ececec" /><path d="M2.500 11.500A7 7 0 0 1 17 9C13 11 12 15 8 16 5 17 1 15 2.500 11.500Z" fill="#b4b4b4" /></g>,
  <><rect x="5" y="8" width="17" height="10" stroke="#fff" strokeWidth="1.300" /><rect x="8" y="10.500" width="11.500" height="5.500" fill="#fff" stroke="none" /><path d="M1.500 5H6.500M2.500 2.500V5M5.500 2.500V5M2 5V7.500C2 9 6 9 6 7.500V5M4 9V14M23.300 11V15" stroke="#fff" /></>,
  <><path d="M4 21C4 11 11 4 20 4M8 21C8 13 13 8 20 8M12 21C12 15 15 12 20 12" stroke="#ccc" strokeWidth="1.300" /><circle cx="18.500" cy="19.500" r="2" fill="#fff" stroke="none" /></>,
  <path d="M1 9.500H4L9 5V19L4 14.500H1ZM12 9.500C13.500 11 13.500 13 12 14.500M15.500 7C18.500 10 18.500 14 15.500 17M19 4.500C23.500 9 23.500 15 19 19.500" stroke="#fff" strokeWidth="1.300" />,
];

const LabelBox = ({ on }: { on?: boolean }) => <Box as="i">{on && <Check />}</Box>;
const Row = ({ t, pad = 24, box, v, combo, vp }: { t: string; pad?: number; box?: boolean | null; v?: string; combo?: boolean; vp?: number }) => (
  <Field pad={pad}>
    <FieldLabel>{box !== undefined && <LabelBox on={!!box} />}{t}</FieldLabel>
    {v !== undefined && <Input pad={vp ?? 3}>{v}{combo && <ComboBtn><Chev d="down" w={1.1} /></ComboBtn>}</Input>}
  </Field>
);
const Head = ({ t, h }: { t: string; h: number }) => <Heading h={h}><HeadTwist><Chev d="down" s={12} c="#444" w={1.9} /></HeadTwist><span>{t}</span></Heading>;

const Options = () => (
  <OptionsDialog>
    <DialogTitle h={37} dim><Logo n="7" /><span>Rhino Options</span><Spacer /><Cross c="#999" /></DialogTitle>
    <OptionsBody>
      <Tree>
        <TreeRows>
          {tree.map(([t, d, s]) => (
            <TreeRow key={t} depth={d} on={t === "print"}>
              <Twist>{s && <Chev d={s === "c" ? "right" : "down"} s={s === "c" ? 11 : 12} c={s === "c" ? "#a0a0a0" : "#444"} w={1.9} />}</Twist>{t}
            </TreeRow>
          ))}
        </TreeRows>
        <ScrollTrack w={19}><ScrollArrow h={22}><Chev d="up" /></ScrollArrow><ScrollGap h={220} /><ScrollThumb h={500} /><ScrollArrow h={21}><Chev d="down" /></ScrollArrow></ScrollTrack>
      </Tree>
      <Form>
        <FormRows>
          <Heading h={37} drop={4}><span>Display mode options</span></Heading>
          <Row t="Name:" v="print" vp={4} />
          <Head t="Viewport settings" h={32} />
          <Row t="Background" v="Solid color" combo />
          <Field pad={48}><FieldLabel>Solid color:</FieldLabel><ColorBtn /></Field>
          <Row t="Ground plane settings" v="Custom" combo />
          <Row t="On" pad={47} box={false} />
          <Row t="Shadow only" pad={47} box />
          <Row t="Altitude" pad={48} v="0.00" vp={4} />
          <Row t="Automatic altitude" pad={47} box />
          <Row t="Linear workflow settings" v="Custom" combo />
          <Row t="Adjust input colors" pad={47} box={false} />
          <Row t="Adjust input textures" pad={47} box={false} />
          <Row t="Input gamma" pad={48} v="1.00" vp={4} />
          <Row t="Adjust output image" pad={47} box={false} />
          <Row t="Output image gamma" pad={48} v="1.00" vp={4} />
          <Head t="Shading settings" h={32} />
          <Row t="Shade objects" pad={23} box />
          <Row t="X-Ray all wires" pad={23} box={false} />
          <Row t="Flat shading" pad={23} box />
          <Row t="Shade vertex colors" pad={23} box={false} />
          <Row t="Color & material usage" pad={48} v="Object's" />
          <Row t="Gloss:" pad={72} v="50" vp={4} />
          <Row t="Transparency:" pad={72} v="0" vp={4} />
          <Rule />
          <Row t="Backface settings" pad={48} v="Use front" />
          <Head t="Visibility" h={32} />
          <Row t="" pad={23} box={false} />
        </FormRows>
        <ScrollTrack w={19}><ScrollGap h={5} /><ScrollArrow h={21}><Chev d="up" /></ScrollArrow><ScrollThumb h={500} /></ScrollTrack>
      </Form>
    </OptionsBody>
    <OptionsFoot><Button w={240} h={33} edge="#adadad">Restore Defaults</Button><Button w={240} h={33} edge="#0078d7" thick={2} /></OptionsFoot>
    <ResizeGrip width="12" height="12" stroke="#888" strokeWidth="1.500"><path d="M0 12 12 0M4 12 12 4M8 12 12 8" /></ResizeGrip>
  </OptionsDialog>
);

const Colors = () => (
  <ColorDialog>
    <DialogTitle h={37}><Logo n="7" /><span>Select Color</span><Spacer /><Cross c="#111" s={13} /></DialogTitle>
    <ColorBody>
      <NameList>
        <NameRows>
          {names.map(([n, c]) => <NameRow key={n} on={n === "White"}><Swatch c={c} on={n === "White"} /><span>{n}</span></NameRow>)}
        </NameRows>
        <ScrollTrack w={21}><ScrollArrow h={21}><Chev d="up" c="#aaa" /></ScrollArrow><ScrollThumb h={62} /><Spacer /><ScrollArrow h={21}><Chev d="down" c="#aaa" /></ScrollArrow></ScrollTrack>
      </NameList>
      <ColorMain>
        <PickerBar>
          <Picker>HSV Color Wheel<Chev d="down" s={9} w={1.8} /></Picker>
          <Gear s={18} c="#bbb" solid />
          <svg width="20" height="20" viewBox="0 0 20 20"><path d="M3 17 4 13 11 6 14 9 7 16Z" fill="#f4f4f4" stroke="#999" strokeWidth="1.300" /><path d="M10 5 15 10M13 7 16 4" stroke="#999" strokeWidth="3.500" strokeLinecap="round" /></svg>
        </PickerBar>
        <PickerRow>
          <Wheel>
            <WheelHole><SatVal /></WheelHole>
            <WheelMark width="372" height="372" fill="none"><path d="M326 186H345" stroke="#1a0000" strokeWidth="2.500" /><circle cx="282" cy="89" r="4.600" fill="#fff" stroke="#111" strokeWidth="1.300" /></WheelMark>
          </Wheel>
          <Sliders>
            {channels.map(([n, g, v, end, k]) => (
              <Channel key={n}>
                <div>{n}</div>
                <ChannelRow><SliderWrap><SliderTrack g={g} /><Knob end={end} c={k} /></SliderWrap><NumBox>{v}</NumBox></ChannelRow>
              </Channel>
            ))}
            <HexRow>Hex:<HexBox>#FFFFFF</HexBox></HexRow>
          </Sliders>
        </PickerRow>
        <Bottom><Compare /><Palette>{Array.from({ length: 75 }, (_, i) => <Chip key={i} c={chips[i]} />)}</Palette></Bottom>
      </ColorMain>
    </ColorBody>
    <ColorFoot><Button w={100} h={30} edge="#0067b8">OK</Button><Button w={100} h={30} edge="#707070">Cancel</Button></ColorFoot>
  </ColorDialog>
);

export default function App() {
  return (
    <Screen>
      <Global />
      <TitleBar>
        <Logo /><span>Rhino 7 Evaluation (17 Days Remaining) - [Top]</span><Spacer />
        <WindowButtons>
          <svg width="13" height="13" stroke="#777"><path d="M0 6.500H12" /></svg>
          <svg width="13" height="13" stroke="#777" fill="none"><path d="M.5 3.500H9.500V12.500H.5ZM3.500 3V.5H12.500V10H10" /></svg>
          <Cross s={13} />
        </WindowButtons>
      </TitleBar>
      <MenuBar>{menus.map(([m, w]) => <Slot w={w} key={m}>{m}</Slot>)}</MenuBar>
      <CommandArea>
        <Grip h={98} />
        <CommandBox>
          <History>
            <HistoryLines>
              <div>Page to display &lt;Render&gt;: Wireframe</div><div>Command: _ViewportProperties</div><div>Command: ~-_OptionsPage</div><div>Page to display &lt;Render&gt;: Wireframe</div>
            </HistoryLines>
            <ScrollTrack w={19}><ScrollArrow h={22}><Chev d="up" /></ScrollArrow><ScrollGap h={9} /><ScrollThumb h={21} /><ScrollArrow h={21}><Chev d="down" /></ScrollArrow></ScrollTrack>
          </History>
          <Prompt>
            <span>Command:</span>
            <SpinCol>
              <SpinBtn><svg width="8" height="5"><path d="M0 5H8L4 0Z" /></svg></SpinBtn>
              <SpinBtn><svg width="8" height="5"><path d="M0 0H8L4 5Z" /></svg></SpinBtn>
            </SpinCol>
          </Prompt>
        </CommandBox>
      </CommandArea>
      <ToolTabs>
        <Grip h={24} />
        <TabStrip>
          <ActiveTab>Standard</ActiveTab>
          <Slot w={82}>CPlanes</Slot><Slot w={87}>Set View</Slot><Slot w={79}>Display</Slot><Slot w={69}>Select</Slot><Slot w={972}>Viewport Layout</Slot><Slot w={86}>Drafting</Slot><Slot w={70}>New in V7</Slot>
          <Spacer /><IconCell w={16} h={20}><Gear s={15} /></IconCell>
        </TabStrip>
      </ToolTabs>
      <ToolRow>
        <Grip h={42} />
        <ToolIcons>{topIcons.map(([k, c], i) => <IconCell key={i} w={i === 0 ? 27 : 28.05} h={26}><Pic k={k} corner={c} s={23} /></IconCell>)}</ToolIcons>
      </ToolRow>
      <Middle>
        <Toolbox>
          <ToolboxHandle />
          <ToolGrid>{sideIcons.map(([k, c], i) => <IconCell key={i}><Pic k={k} corner={c} s={23} /></IconCell>)}</ToolGrid>
        </Toolbox>
        <ViewColumn>
          <Viewport><Drawing /></Viewport>
          <ViewTabs>
            <TabOutline width="64" height="28" fill="none" stroke={LINE}><path d="M1 1 25 26.500H57L60.500 23.500V1" /></TabOutline>
            <Slot w={96}>Perspective</Slot><Slot w={48}>Top</Slot><Slot w={55}>Front</Slot><Slot w={58}>Right</Slot>
            <IconCell w={12} h={27}><svg width="11" height="11" fill="none" stroke="#888"><path d="M4 .5H7V4H10.500V7H7V10.500H4V7H.5V4H4Z" /></svg></IconCell>
          </ViewTabs>
        </ViewColumn>
        <Properties>
          <PropTitle>Properties: View properties</PropTitle>
          <PropTabs>
            {propIcons.map((k, i) => <PropTab key={i} on={i === 0}>{i === 0 ? <ColorRing /> : <Pic k={k} s={21} />}</PropTab>)}
            <PropTab><Gear s={19} c="#c3cad8" /></PropTab>
          </PropTabs>
          <PropBody>
            <PropButtons>
              <PropButton on><svg width="26" height="24" viewBox="0 0 26 24"><path d="M1 6H7L10 1H17L19 5H25V21H1Z" fill="#2a2c2e" /><path d="M9 4H17" stroke="#777" strokeWidth="2" /><circle cx="15" cy="13.500" r="7" fill="#111" stroke="#aaa" strokeWidth="1.500" /><circle cx="15" cy="13.500" r="3.500" fill="#2c3d38" stroke="#777" /></svg></PropButton>
              <PropButton><svg width="30" height="28"><rect x="1" y="1" width="28" height="26" fill="#8e9499" stroke="#4c5054" strokeWidth="2" /><rect x="3.500" y="3.500" width="23" height="21" fill="#8cc5dc" /><rect x="6" y="6" width="18" height="16" fill="#fff" stroke="#e2574c" strokeWidth="1.500" /></svg></PropButton>
            </PropButtons>
            <PropHeading>Viewport</PropHeading>
            <PropRow><span>Title</span><div>Top</div></PropRow>
          </PropBody>
        </Properties>
      </Middle>
      <OsnapBar>
        <Grip h={24} />
        <Slot w={5} />
        {snaps.map(([t, w, s]) => <Snap key={t} w={w}><Box off={s === "d"}>{s === "x" && <Check />}</Box>{t}</Snap>)}
      </OsnapBar>
      <StatusBar>
        <Status w={168} /><Status w={108} mid>y</Status><Status w={108} mid>z</Status><Status w={108} mid>Distance</Status>
        <Status w={208} pad={4}><LayerChip />Default</Status><Status w={81} pad={8}>Grid Snap</Status><Status w={54} pad={8}>Ortho</Status><Status w={56} pad={8}>Planar</Status>
        <Status w={59} on>Osnap</Status><Status w={90} on>SmartTrack</Status><Status w={72} on>Gumball</Status>
        <Status w={113} pad={8}>Record History</Status><Status w={50} pad={9}>Filter</Status><Status w={637} pad={1}>Minutes from last save: 465</Status>
      </StatusBar>
      <Taskbar>
        <Start><svg width="20" height="20" fill="#fff"><path d="M0 2.700 8.200 1.600V9.500H0ZM9.200 1.400 20 0V9.500H9.200ZM0 10.500H8.200V18.400L0 17.300ZM9.200 10.500H20V20L9.200 18.600Z" /></svg></Start>
        {taskIcons.map(([k, s], i) => <App_ key={i} state={s}><Pic k={k} /></App_>)}
        <Spacer />
        <Tray>
          {trayIcons.map((k, i) => <TrayCell w={30.100} key={i}><Pic k={k} s={22} /></TrayCell>)}
          <TrayCell w={44}>POR</TrayCell><TrayCell w={52}>16:01</TrayCell>
          <TrayCell w={50}><svg width="20" height="20" viewBox="0 0 20 20"><path d="M0 0H20V16H13L10 20 7 16H0Z" fill="#fff" /><path d="M4 4.500H16M4 8H16M4 11.500H12" stroke="#111" strokeWidth="1.400" /></svg></TrayCell>
        </Tray>
      </Taskbar>
      <MiniEdge />
      <MiniWindow><svg width="12" height="12" fill="none" stroke="#777"><rect x=".5" y=".5" width="11" height="11" /></svg><Cross s={13} c="#777" /></MiniWindow>
      <Options />
      <Colors />
      <PenLayer width="1920" height="1080" fill="none" stroke={PEN} strokeWidth="7" strokeLinecap="round" strokeLinejoin="round">
        <path d="M1324 43 1352 13C1356 35 1357 55 1358 76M1331 80.500C1355 80 1380 84 1407 83" />
        <path d="M1355 118C1354 140 1350 160 1346 175C1338 195 1325 204 1318 212L1278 247Q1270 255 1262 256M1272 228C1264 240 1256 255 1253 270L1302 286" />
        <path d="M1482 313C1498 313 1508 306 1523 305Q1527 306 1526 312C1522 330 1514 350 1511.500 368Q1512 373 1520 372.500L1561 367M1485 351 1340 398C1310 410 1290 420 1267 422" />
        <path d="M1144 419C1160 417 1172 413 1187 413L1258 411.500Q1263 412 1263 418L1263 438 1266 455 1230 458 1146 459Q1139 459 1139.500 450V425" />
      </PenLayer>
    </Screen>
  );
}
